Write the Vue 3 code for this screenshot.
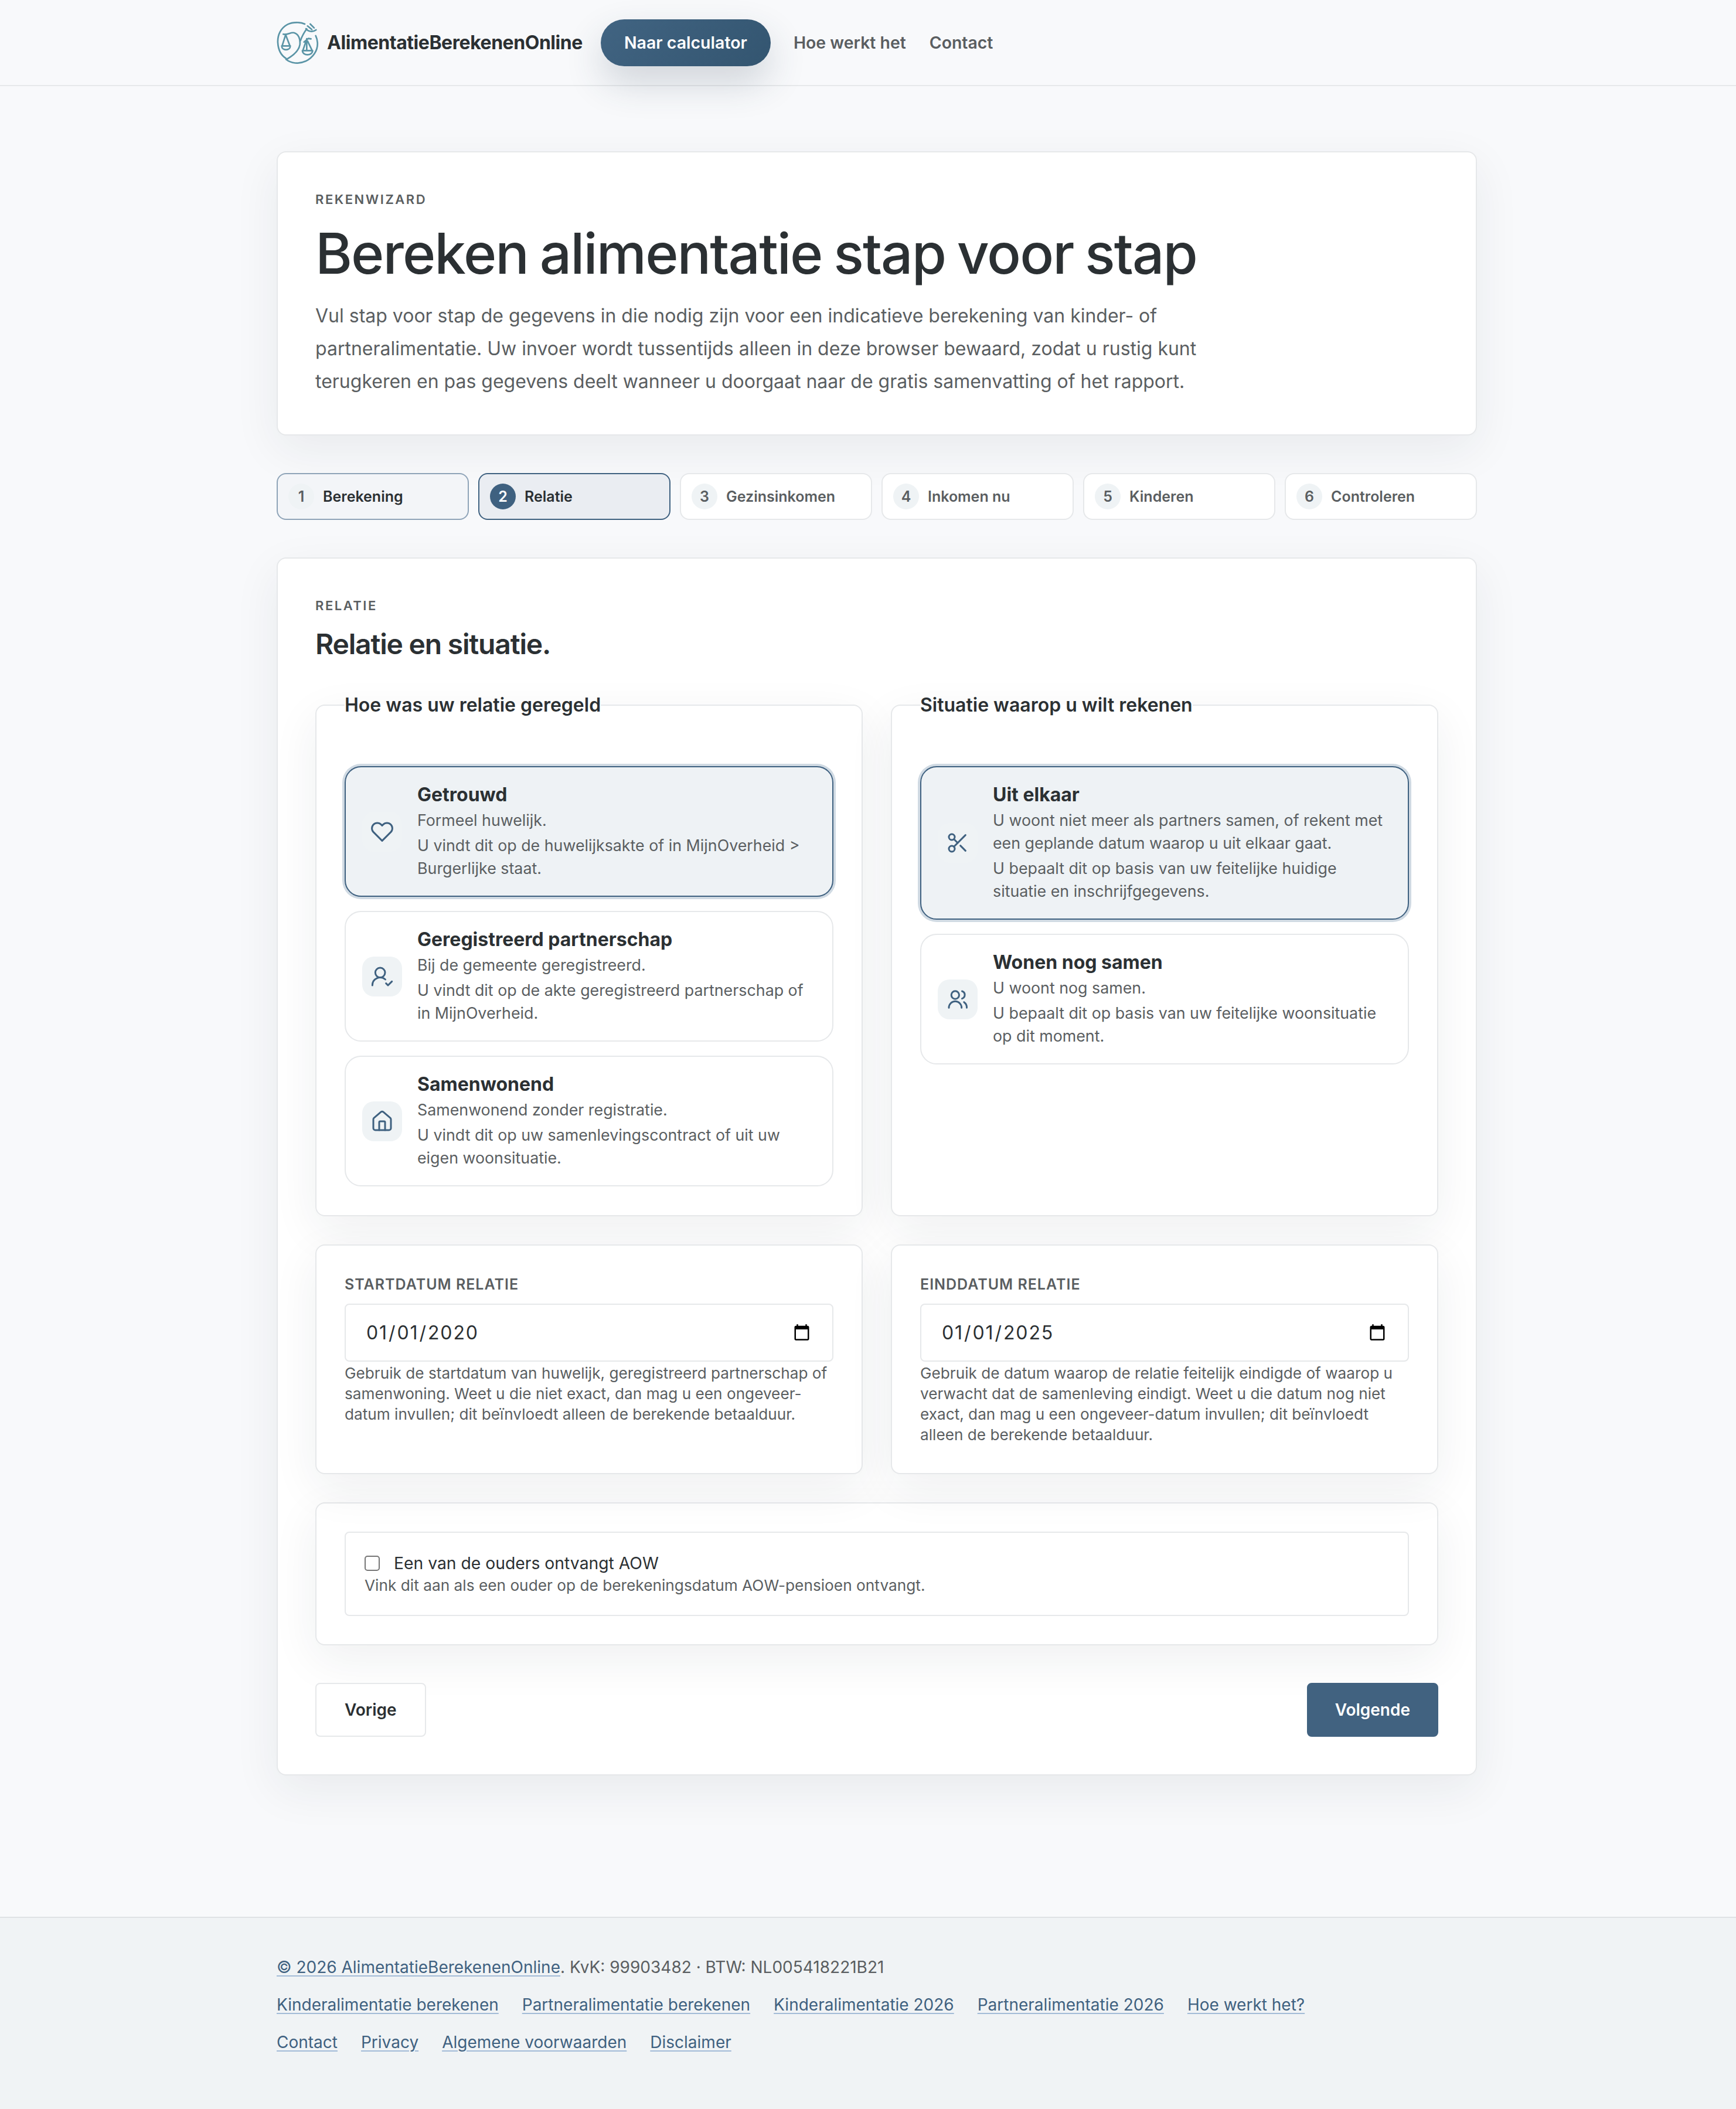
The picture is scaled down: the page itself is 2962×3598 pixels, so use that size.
<template>
  <div class="page">
    <header class="topbar">
      <div class="topbar-inner">
        <a class="brand">
          <svg class="brand-logo" viewBox="36 45 216 222" fill="none" stroke="#5a94a6" stroke-width="8" stroke-linecap="round" stroke-linejoin="round">
            <path d="M180 60C160 50 120 48 92 62C58 80 40 115 42 155C44 190 58 220 84 236" />
            <path d="M70 112C90 118 108 100 126 105C150 112 158 140 155 165C150 200 120 222 88 240" />
            <path d="M84 241C110 262 150 266 185 250C222 232 248 195 245 155C244 142 241 130 236 120" />
            <path d="M190 85C176 104 166 122 158 145" />
            <path d="M186 84C198 100 222 102 238 90" />
            <path d="M194 70L216 88M208 60L228 80" />
            <path d="M82 115L64 172M82 115L104 172M62 172H106C106 198 62 198 62 172Z" />
            <path d="M190 135L190 195M176 152L198 134L212 136M190 138L170 196M190 138L218 196M168 196H220C220 224 168 224 168 196Z" />
          </svg>
          <span class="brand-name">AlimentatieBerekenenOnline</span>
        </a>
        <a class="cta">Naar calculator</a>
        <nav class="topnav">
          <a>Hoe werkt het</a>
          <a>Contact</a>
        </nav>
      </div>
    </header>

    <main class="content">
      <section class="card hero">
        <div class="eyebrow">REKENWIZARD</div>
        <h1>Bereken alimentatie stap voor stap</h1>
        <p>Vul stap voor stap de gegevens in die nodig zijn voor een indicatieve berekening van kinder- of partneralimentatie. Uw invoer wordt tussentijds alleen in deze browser bewaard, zodat u rustig kunt terugkeren en pas gegevens deelt wanneer u doorgaat naar de gratis samenvatting of het rapport.</p>
      </section>

      <ol class="steps">
        <li v-for="(s, i) in steps" :key="s" class="step" :class="{ done: i === 0, active: i === 1 }">
          <span class="step-nr">{{ i + 1 }}</span>
          <span>{{ s }}</span>
        </li>
      </ol>

      <section class="card wizard">
        <div class="eyebrow">RELATIE</div>
        <h2>Relatie en situatie.</h2>

        <div class="two-col">
          <fieldset v-for="g in groups" :key="g.legend" class="card group">
            <legend>{{ g.legend }}</legend>
            <div class="options">
              <div v-for="o in g.options" :key="o.title" class="option" :class="{ selected: o.selected }">
                <span class="option-icon">
                  <svg viewBox="0 0 24 24" fill="none" stroke="#3f6180" stroke-width="1.8" stroke-linecap="round" stroke-linejoin="round">
                    <path v-for="d in icons[o.icon]" :key="d" :d="d" />
                  </svg>
                </span>
                <div class="option-text">
                  <strong>{{ o.title }}</strong>
                  <span class="option-sub">{{ o.sub }}</span>
                  <span class="option-hint">{{ o.hint }}</span>
                </div>
              </div>
            </div>
          </fieldset>
        </div>

        <div class="two-col dates">
          <div v-for="d in dates" :key="d.label" class="card date-card">
            <label>{{ d.label }}</label>
            <input type="date" :value="d.value" />
            <p>{{ d.help }}</p>
          </div>
        </div>

        <div class="card aow-card">
          <div class="aow-box">
            <label class="aow-check">
              <input type="checkbox" />
              <span>Een van de ouders ontvangt AOW</span>
            </label>
            <p>Vink dit aan als een ouder op de berekeningsdatum AOW-pensioen ontvangt.</p>
          </div>
        </div>

        <div class="actions">
          <button class="btn">Vorige</button>
          <button class="btn primary">Volgende</button>
        </div>
      </section>
    </main>

    <footer class="footer">
      <div class="footer-inner">
        <div><a>© 2026 AlimentatieBerekenenOnline</a>. KvK: 99903482 · BTW: NL005418221B21</div>
        <div class="footer-links"><a v-for="l in links1" :key="l">{{ l }}</a></div>
        <div class="footer-links"><a v-for="l in links2" :key="l">{{ l }}</a></div>
      </div>
    </footer>
  </div>
</template>

<script setup>
const steps = ['Berekening', 'Relatie', 'Gezinsinkomen', 'Inkomen nu', 'Kinderen', 'Controleren']

const icons = {
  heart: ['M20.84 4.61a5.5 5.5 0 0 0-7.78 0L12 5.67l-1.06-1.06a5.5 5.5 0 0 0-7.78 7.78l1.06 1.06L12 21.23l7.78-7.78 1.06-1.06a5.5 5.5 0 0 0 0-7.78z'],
  userCheck: ['M2 21a8 8 0 0 1 13.292-6', 'M15 8a5 5 0 1 1-10 0a5 5 0 1 1 10 0z', 'm16 19 2 2 4-4'],
  home: ['M3 10a2 2 0 0 1 .7-1.5l7-6a2 2 0 0 1 2.6 0l7 6a2 2 0 0 1 .7 1.5v9a2 2 0 0 1-2 2H5a2 2 0 0 1-2-2z', 'M15 21v-8a1 1 0 0 0-1-1h-4a1 1 0 0 0-1 1v8'],
  scissors: ['M9 6a3 3 0 1 1-6 0a3 3 0 1 1 6 0z', 'M8.12 8.12 12 12', 'M20 4 8.12 15.88', 'M9 18a3 3 0 1 1-6 0a3 3 0 1 1 6 0z', 'M14.8 14.8 20 20'],
  users: ['M3 20.5a6.5 6.5 0 0 1 13 0', 'M13.5 7.5a4 4 0 1 1-8 0a4 4 0 1 1 8 0z', 'M16.5 3.6a4 4 0 0 1 0 7.6', 'M18.5 14.8a6.5 6.5 0 0 1 2.8 5.7'],
}

const groups = [
  {
    legend: 'Hoe was uw relatie geregeld',
    options: [
      { title: 'Getrouwd', icon: 'heart', selected: true, sub: 'Formeel huwelijk.', hint: 'U vindt dit op de huwelijksakte of in MijnOverheid > Burgerlijke staat.' },
      { title: 'Geregistreerd partnerschap', icon: 'userCheck', sub: 'Bij de gemeente geregistreerd.', hint: 'U vindt dit op de akte geregistreerd partnerschap of in MijnOverheid.' },
      { title: 'Samenwonend', icon: 'home', sub: 'Samenwonend zonder registratie.', hint: 'U vindt dit op uw samenlevingscontract of uit uw eigen woonsituatie.' },
    ],
  },
  {
    legend: 'Situatie waarop u wilt rekenen',
    options: [
      { title: 'Uit elkaar', icon: 'scissors', selected: true, sub: 'U woont niet meer als partners samen, of rekent met een geplande datum waarop u uit elkaar gaat.', hint: 'U bepaalt dit op basis van uw feitelijke huidige situatie en inschrijfgegevens.' },
      { title: 'Wonen nog samen', icon: 'users', sub: 'U woont nog samen.', hint: 'U bepaalt dit op basis van uw feitelijke woonsituatie op dit moment.' },
    ],
  },
]

const dates = [
  { label: 'STARTDATUM RELATIE', value: '2020-01-01', help: 'Gebruik de startdatum van huwelijk, geregistreerd partnerschap of samenwoning. Weet u die niet exact, dan mag u een ongeveer-datum invullen; dit beïnvloedt alleen de berekende betaalduur.' },
  { label: 'EINDDATUM RELATIE', value: '2025-01-01', help: 'Gebruik de datum waarop de relatie feitelijk eindigde of waarop u verwacht dat de samenleving eindigt. Weet u die datum nog niet exact, dan mag u een ongeveer-datum invullen; dit beïnvloedt alleen de berekende betaalduur.' },
]

const links1 = ['Kinderalimentatie berekenen', 'Partneralimentatie berekenen', 'Kinderalimentatie 2026', 'Partneralimentatie 2026', 'Hoe werkt het?']
const links2 = ['Contact', 'Privacy', 'Algemene voorwaarden', 'Disclaimer']
</script>

<style>
body {
  background: #f8f9fb;
}
</style>

<style scoped>
.page {
  font-family: Inter, "Liberation Sans", sans-serif;
  color: #2b3033;
  background: #f8f9fb;
  min-height: 100vh;
  display: flex;
  flex-direction: column;
}
.topbar {
  height: 147px;
  border-bottom: 2px solid #e6e8ea;
  box-sizing: border-box;
}
.topbar-inner {
  width: 2048px;
  margin-left: 472px;
  height: 145px;
  display: flex;
  align-items: center;
}
.brand {
  display: flex;
  align-items: center;
  gap: 14px;
}
.brand-logo {
  width: 72px;
  height: 74px;
}
.brand-name {
  font-size: 32px;
  font-weight: 700;
  letter-spacing: -0.45px;
}
.cta {
  margin-left: 31px;
  width: 290px;
  height: 80px;
  line-height: 80px;
  text-align: center;
  border-radius: 40px;
  color: #fff;
  font-size: 28.5px;
  font-weight: 600;
  background: linear-gradient(135deg, #416482, #335570);
  box-shadow: 0 28px 64px rgba(45, 65, 85, 0.2);
}
.topnav {
  display: flex;
  gap: 40px;
  margin-left: 39px;
  font-size: 28.4px;
  font-weight: 600;
  color: #5a5e61;
}
.content {
  width: 2048px;
  margin-left: 472px;
  padding: 111px 0 241px;
}
.card {
  background: #fff;
  border: 2px solid #e6e8ea;
  border-radius: 16px;
  box-shadow: 0 24px 80px rgba(31, 41, 51, 0.07);
  box-sizing: border-box;
}
.eyebrow {
  font-size: 22px;
  font-weight: 600;
  letter-spacing: 0.115em;
  line-height: 32px;
  color: #5a5e61;
}
.hero {
  padding: 64px 64px 62px;
}
.hero h1 {
  margin: 23px 0 26px;
  font-size: 96px;
  line-height: 106px;
  font-weight: 500;
  letter-spacing: -1.95px;
  word-spacing: -4px;
}
.hero p {
  margin: 0;
  max-width: 1520px;
  font-size: 32px;
  line-height: 56px;
  color: #5a5e61;
}
.steps {
  list-style: none;
  margin: 64px 0;
  padding: 0;
  display: grid;
  grid-template-columns: repeat(6, 1fr);
  gap: 16px;
}
.step {
  display: flex;
  align-items: center;
  gap: 15px;
  height: 80px;
  padding: 0 18px;
  box-sizing: border-box;
  border: 2px solid #e6e8ea;
  border-radius: 16px;
  background: #fff;
  font-size: 25px;
  font-weight: 600;
  color: #5a5e61;
}
.step-nr {
  width: 44px;
  height: 44px;
  border-radius: 50%;
  background: #eff3f5;
  display: flex;
  align-items: center;
  justify-content: center;
}
.step.done {
  background: #f3f5f8;
  border-color: #8fa4b8;
  color: #2b3033;
}
.step.done .step-nr {
  color: #5a5e61;
}
.step.active {
  background: #eaedf2;
  border-color: #3f6180;
  color: #2b3033;
}
.step.active .step-nr {
  background: #3f6180;
  color: #fff;
}
.wizard {
  padding: 64px;
}
.wizard h2 {
  margin: 21px 0 55px;
  font-size: 48px;
  line-height: 58px;
  font-weight: 600;
  letter-spacing: -1.2px;
}
.two-col {
  display: grid;
  grid-template-columns: 1fr 1fr;
  gap: 48px;
}
.group {
  margin: 0;
  min-width: 0;
  padding: 0 48px 49px;
}
.group legend {
  padding: 0;
  font-size: 32px;
  line-height: 40px;
  font-weight: 600;
}
.options {
  margin-top: 84px;
  display: flex;
  flex-direction: column;
  gap: 24px;
}
.option {
  display: flex;
  align-items: center;
  gap: 26px;
  padding: 27px 28px;
  border: 2px solid #e6e8ea;
  border-radius: 28px;
  background: #fff;
}
.option.selected {
  background: #eef2f5;
  border-color: #3f6180;
  box-shadow: 0 0 0 4px #d0dae3;
}
.option-icon {
  flex: none;
  width: 68px;
  height: 68px;
  border-radius: 20px;
  background: #eff3f5;
  display: flex;
  align-items: center;
  justify-content: center;
}
.option-icon svg {
  width: 40px;
  height: 40px;
}
.option-text {
  display: flex;
  flex-direction: column;
  min-width: 0;
}
.option-text strong {
  font-size: 32px;
  line-height: 40px;
  font-weight: 700;
  margin-bottom: 4px;
}
.option-sub,
.option-hint {
  font-size: 26.8px;
  line-height: 39px;
  color: #5a5e61;
}
.option-hint {
  margin-top: 4px;
}
.dates {
  margin-top: 48px;
}
.date-card {
  padding: 50px 48px 48px;
}
.date-card label {
  display: block;
  font-size: 25px;
  font-weight: 600;
  line-height: 32px;
  letter-spacing: 1px;
  color: #5a5e61;
}
.date-card input {
  display: block;
  width: 100%;
  height: 99px;
  margin-top: 17px;
  padding: 0 34px;
  box-sizing: border-box;
  border: 2px solid #e6e8ea;
  border-radius: 8px;
  background: #fff;
  font-family: inherit;
  font-size: 32px;
  letter-spacing: 1.9px;
  color: #2b3033;
}
.date-card p {
  margin: 2px 0 0;
  font-size: 26.2px;
  line-height: 35px;
  color: #5a5e61;
}
.aow-card {
  margin-top: 48px;
  padding: 48px;
}
.aow-box {
  border: 2px solid #e6e8ea;
  border-radius: 8px;
  padding: 32px;
}
.aow-check {
  display: flex;
  align-items: center;
  gap: 24px;
  font-size: 28.3px;
  line-height: 40px;
}
.aow-check input {
  appearance: none;
  margin: 0;
  width: 26px;
  height: 26px;
  border: 2px solid #767676;
  border-radius: 5px;
  background: #fff;
}
.aow-box p {
  margin: 0;
  font-size: 26.25px;
  line-height: 36px;
  color: #5a5e61;
}
.actions {
  margin-top: 64px;
  display: flex;
  justify-content: space-between;
}
.btn {
  height: 92px;
  padding: 0 48px;
  border: 2px solid #e6e8ea;
  border-radius: 8px;
  background: #fff;
  font-family: inherit;
  font-size: 28px;
  font-weight: 600;
  color: #2b3033;
}
.btn.primary {
  padding: 0 46px;
  background: #416280;
  border-color: #416280;
  color: #fff;
}
.footer {
  flex: 1;
  border-top: 2px solid #dfe2e5;
  background: #f0f3f5;
  padding: 64px 0 60px;
}
.footer-inner {
  width: 2048px;
  margin-left: 472px;
  display: flex;
  flex-direction: column;
  gap: 24px;
  font-size: 28px;
  line-height: 40px;
  color: #5a5e61;
}
.footer-links {
  display: flex;
  gap: 40px;
}
.footer a {
  color: #3f6180;
  text-decoration: underline;
  text-decoration-color: #a3bbd7;
  text-decoration-thickness: 2px;
  text-underline-offset: 4px;
}
</style>
